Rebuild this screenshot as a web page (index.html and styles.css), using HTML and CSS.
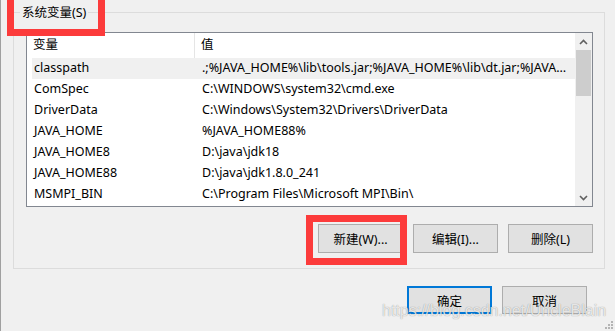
FILE: index.html
```html
<!DOCTYPE html>
<html lang="zh-CN">
<head>
  <meta charset="UTF-8">
  <title>环境变量</title>
  <link rel="stylesheet" href="styles.css">
</head>
<body>
  <div class="dialog">
    <fieldset class="group">
      <legend>系统变量(S)</legend>

      <div class="listview">
        <div class="list-body">
          <div class="list-head">
            <span class="head-name">变量</span>
            <span class="head-value">值</span>
          </div>
          <div class="row selected">
            <span class="cell-name">classpath</span>
            <span class="cell-value">.;%JAVA_HOME%\lib\tools.jar;%JAVA_HOME%\lib\dt.jar;%JAVA_HOME%\bin;</span>
          </div>
          <div class="row">
            <span class="cell-name">ComSpec</span>
            <span class="cell-value">C:\WINDOWS\system32\cmd.exe</span>
          </div>
          <div class="row">
            <span class="cell-name">DriverData</span>
            <span class="cell-value">C:\Windows\System32\Drivers\DriverData</span>
          </div>
          <div class="row">
            <span class="cell-name">JAVA_HOME</span>
            <span class="cell-value">%JAVA_HOME88%</span>
          </div>
          <div class="row">
            <span class="cell-name">JAVA_HOME8</span>
            <span class="cell-value">D:\java\jdk18</span>
          </div>
          <div class="row">
            <span class="cell-name">JAVA_HOME88</span>
            <span class="cell-value">D:\java\jdk1.8.0_241</span>
          </div>
          <div class="row">
            <span class="cell-name">MSMPI_BIN</span>
            <span class="cell-value">C:\Program Files\Microsoft MPI\Bin\</span>
          </div>
        </div>

        <div class="scrollbar">
          <div class="scroll-btn">
            <svg width="9" height="6" viewBox="0 0 9 6"><path d="M1 5 L4.5 1.5 L8 5" fill="none" stroke="#606060" stroke-width="1.6"/></svg>
          </div>
          <div class="scroll-thumb"></div>
          <div class="scroll-track"></div>
          <div class="scroll-btn">
            <svg width="9" height="6" viewBox="0 0 9 6"><path d="M1 1 L4.5 4.5 L8 1" fill="none" stroke="#606060" stroke-width="1.6"/></svg>
          </div>
        </div>
      </div>

      <div class="list-actions">
        <button class="btn">新建(W)...</button>
        <button class="btn">编辑(I)...</button>
        <button class="btn">删除(L)</button>
      </div>
    </fieldset>

    <div class="dialog-actions">
      <button class="btn btn-default">确定</button>
      <button class="btn">取消</button>
    </div>

    <!-- annotations drawn over the screenshot -->
    <div class="mark mark-group"></div>
    <div class="mark mark-new"></div>
    <div class="watermark">https://blog.csdn.net/UncleBlain</div>

    <svg class="grip" width="8" height="8" viewBox="0 0 8 8">
      <rect x="6" y="0" width="2" height="2" fill="#b4b4b4"/>
      <rect x="3" y="3" width="2" height="2" fill="#b4b4b4"/>
      <rect x="6" y="3" width="2" height="2" fill="#b4b4b4"/>
      <rect x="0" y="6" width="2" height="2" fill="#b4b4b4"/>
      <rect x="3" y="6" width="2" height="2" fill="#b4b4b4"/>
      <rect x="6" y="6" width="2" height="2" fill="#b4b4b4"/>
    </svg>
  </div>
</body>
</html>
```

FILE: styles.css
```css
* {
  box-sizing: border-box;
}

body {
  margin: 0;
  background: #f0f0f0;
  font-family: "Noto Sans", "Noto Sans CJK SC", sans-serif;
  font-size: 12.5px;
  color: #000;
}

.dialog {
  position: relative;
  width: 615px;
  height: 331px;
  overflow: hidden;
  border-left: 1px solid #a0a0a0;
}

.group {
  margin: 4px 10px 0 12px;
  height: 265px;
  padding: 11px 11px 0 12px;
  border: 1px solid #dcdcdc;
  min-width: 0;
}

.group legend {
  margin-left: -6px;
  padding: 0 2px;
  line-height: 17px;
  font-size: 12.5px;
}

.listview {
  display: flex;
  height: 175px;
  border: 1px solid #828790;
  background: #fff;
}

.list-body {
  flex: 1;
  min-width: 0;
}

.list-head {
  display: flex;
  height: 25px;
  line-height: 24px;
}

.head-name {
  width: 168px;
  padding-left: 6px;
  border-right: 1px solid #e5e5e5;
}

.head-value {
  padding-left: 6px;
}

.row {
  display: flex;
  height: 21px;
  line-height: 20px;
  margin-left: 5px;
  white-space: nowrap;
}

.row.selected {
  background: #f0f0f0;
}

.cell-name {
  width: 163px;
  flex-shrink: 0;
  padding-left: 2px;
}

.cell-value {
  flex: 1;
  min-width: 0;
  padding-left: 7px;
  padding-right: 4px;
  overflow: hidden;
  text-overflow: ellipsis;
}

.scrollbar {
  width: 17px;
  display: flex;
  flex-direction: column;
  background: #f0f0f0;
}

.scroll-btn {
  height: 17px;
  display: flex;
  align-items: center;
  justify-content: center;
}

.scroll-thumb {
  height: 46px;
  margin: 0 1px;
  background: #cdcdcd;
}

.scroll-track {
  flex: 1;
}

.list-actions {
  display: flex;
  justify-content: flex-end;
  gap: 10px;
  margin-top: 17px;
}

.btn {
  width: 85px;
  height: 29px;
  padding: 0;
  background: #e1e1e1;
  border: 1px solid #adadad;
  border-radius: 0;
  font-family: inherit;
  font-size: 12.5px;
  color: #000;
}

.dialog-actions {
  display: flex;
  justify-content: flex-end;
  gap: 10px;
  margin-top: 17px;
  padding-right: 28px;
}

.dialog-actions .btn {
  height: 28px;
}

.btn-default {
  border: 2px solid #0078d7;
}

.mark {
  position: absolute;
  border: 7px solid #fc3b3b;
}

.mark-group {
  left: 6px;
  top: -10px;
  width: 98px;
  height: 46px;
}

.mark-new {
  left: 305px;
  top: 215px;
  width: 101px;
  height: 50px;
}

.watermark {
  position: absolute;
  left: 381px;
  top: 302px;
  font-family: "Liberation Sans", sans-serif;
  font-size: 16px;
  color: rgba(255, 255, 255, 0.8);
  text-shadow: 0 0 1px rgba(0, 0, 0, 0.45);
  white-space: nowrap;
}

.grip {
  position: absolute;
  right: 2px;
  bottom: 2px;
}
```
